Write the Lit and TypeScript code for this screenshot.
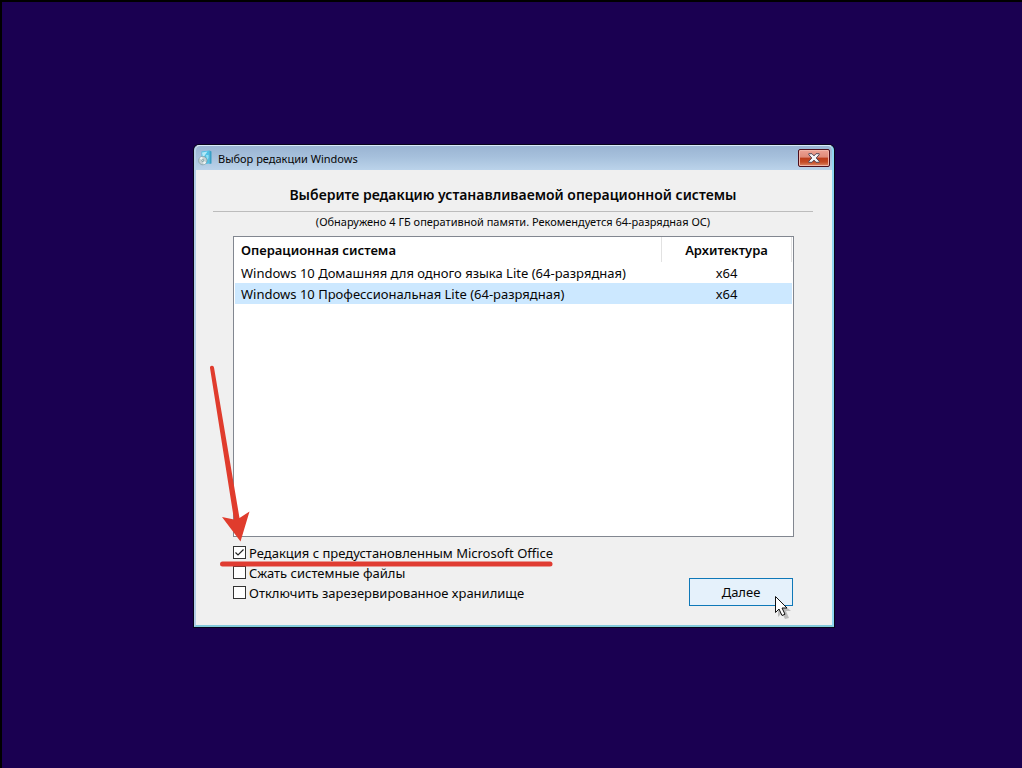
import { LitElement, html, css, svg } from "lit";
import { customElement, state } from "lit/decorators.js";

interface Edition {
  name: string;
  arch: string;
}

const EDITIONS: Edition[] = [
  { name: "Windows 10 Домашняя для одного языка Lite (64-разрядная)", arch: "x64" },
  { name: "Windows 10 Профессиональная Lite (64-разрядная)", arch: "x64" },
];

const OPTIONS = [
  { id: "office", label: "Редакция с предустановленным Microsoft Office", checked: true },
  { id: "compact", label: "Сжать системные файлы", checked: false },
  { id: "reserve", label: "Отключить зарезервированное хранилище", checked: false },
];

@customElement("app-root")
export class AppRoot extends LitElement {
  @state() private selected = 1;

  static styles = css`
    :host {
      display: grid;
      justify-items: center;
      align-items: center;
      box-sizing: border-box;
      min-height: 100vh;
      padding: 2px 0 0 4px;
      border-top: 2px solid #000;
      border-left: 2px solid #000;
      background: #1a0051;
      color: #060606;
      font: 13px/20px "Noto Sans", "Open Sans", sans-serif;
    }
    * {
      box-sizing: border-box;
    }
    .window {
      position: relative;
      width: 100%;
      max-width: 640px;
      border: 2px solid #b4d0e6;
      border-top: 1px solid #d9eaf8;
      border-right-color: #8fd6f0;
      border-bottom-color: #83cbdc;
      border-radius: 5px 5px 0 0;
      background: #f0f0f0;
      box-shadow: 0 0 0 1px #08041c;
    }
    .titlebar {
      display: flex;
      align-items: center;
      gap: 6px;
      height: 24px;
      padding: 0 2px;
      border-radius: 4px 4px 0 0;
      background: linear-gradient(#9ab4d2, #a6c0dc 45%, #bbd3ea);
    }
    .app-icon {
      width: 14px;
      height: 16px;
    }
    .caption {
      flex: 1;
      padding-top: 1px;
      font-size: 11px;
    }
    .close {
      display: flex;
      align-items: center;
      justify-content: center;
      width: 32px;
      height: 18px;
      padding: 0;
      border: 1px solid #4d0f1c;
      border-radius: 2px;
      background: linear-gradient(#eda294, #df8a78 45%, #bc3d1a 50%, #c44a24 75%, #dd8a68);
      box-shadow: inset 0 0 0 1px #f0b5a8;
    }
    .content {
      padding: 15px 19px 19px 17px;
    }
    h1 {
      margin: 0;
      padding-bottom: 6px;
      border-bottom: 1px solid #bcbcbc;
      font-size: 14px;
      line-height: 20px;
      font-weight: 600;
      text-align: center;
    }
    .note {
      margin: 0;
      font-size: 11px;
      text-align: center;
    }
    .panel {
      padding: 4px 19px 0 20px;
    }
    .list {
      min-height: 301px;
      padding: 0 1px;
      border: 1px solid #828790;
      background: #fff;
    }
    table {
      width: 100%;
      border-collapse: collapse;
      table-layout: fixed;
    }
    th {
      height: 25px;
      padding: 1px 6px 0;
      border-right: 1px solid #e2e2e2;
      font-weight: 600;
      text-align: left;
    }
    td {
      height: 21px;
      padding: 0 6px;
    }
    .arch {
      width: 130px;
      text-align: center;
    }
    .selected {
      background: #cce8ff;
    }
    .footer {
      display: flex;
      align-items: flex-end;
      justify-content: space-between;
      padding: 6px 1px 0 0;
    }
    .options {
      padding-bottom: 3px;
    }
    .option {
      display: flex;
      align-items: flex-start;
      gap: 3px;
      height: 20px;
    }
    .option input {
      appearance: none;
      width: 13px;
      height: 13px;
      margin: 3px 0 0;
      border: 1px solid #333;
      background: #fff;
    }
    .option input:checked {
      background: #fff
        url("data:image/svg+xml,%3Csvg xmlns='http://www.w3.org/2000/svg' viewBox='0 0 11 11'%3E%3Cpath d='M1.5 5.5 4 8 9.5 2.5' fill='none' stroke='%23222' stroke-width='1.2'/%3E%3C/svg%3E");
    }
    .next {
      width: 104px;
      height: 28px;
      border: 1px solid #0f78b8;
      background: #e5f1fb;
      color: inherit;
      font: inherit;
    }
    .marks {
      position: absolute;
      left: 7px;
      top: 215px;
      width: 360px;
      height: 210px;
      pointer-events: none;
    }
    .cursor {
      position: absolute;
      right: 40px;
      bottom: 4px;
      width: 18px;
      height: 26px;
      pointer-events: none;
    }
  `;

  private icon() {
    return svg`<svg class="app-icon" viewBox="0 0 14 16" aria-hidden="true">
      <path d="M3.500 1.500 11.500 .5v13L3.500 14.500z" fill="#4fc0e4" />
      <path d="M11.500 .5 13.500 1.500v12l-2 .5z" fill="#3aa0c6" />
      <path d="M4 2.500 9.500 1.500 5 8z" fill="#b4e9f8" />
      <path d="M8 5h2.500v3L9 10z" fill="#8edff5" />
      <circle cx="4.800" cy="10.600" r="4.200" fill="#c3d0d4" stroke="#7f999f" stroke-width=".7" />
      <path d="M4.800 10.600 1.500 8.500A4 4 0 0 1 4.200 6.700zM4.800 10.600 8.200 12.300a4 4 0 0 1-2.600 2.200z" fill="#eef4f3" />
      <circle cx="4.800" cy="10.600" r="1.300" fill="#78989d" />
      <circle cx="4.800" cy="10.600" r=".6" fill="#e8f5f4" />
    </svg>`;
  }

  render() {
    return html`
      <main class="window">
        <header class="titlebar">
          ${this.icon()}
          <span class="caption">Выбор редакции Windows</span>
          <button class="close" aria-label="Закрыть">
            <svg width="12" height="10" viewBox="0 0 12 10" aria-hidden="true">
              <path
                d="M.8.7H4L6 2.900 8 .7h3.200v1L8.200 5l3 3.300v1H8L6 7.100 4 9.300H.8v-1l3-3.300-3-3.300z"
                fill="#f4f4f6"
                stroke="#554858"
                stroke-width="1"
              />
            </svg>
          </button>
        </header>
        <div class="content">
          <h1>Выберите редакцию устанавливаемой операционной системы</h1>
          <p class="note">(Обнаружено 4 ГБ оперативной памяти. Рекомендуется 64-разрядная ОС)</p>
          <div class="panel">
            <div class="list">
              <table>
                <thead>
                  <tr>
                    <th>Операционная система</th>
                    <th class="arch">Архитектура</th>
                  </tr>
                </thead>
                <tbody>
                  ${EDITIONS.map(
                    (e, i) => html`<tr
                      class=${i === this.selected ? "selected" : ""}
                      @click=${() => (this.selected = i)}
                    >
                      <td>${e.name}</td>
                      <td class="arch">${e.arch}</td>
                    </tr>`
                  )}
                </tbody>
              </table>
            </div>
            <div class="footer">
              <div class="options">
                ${OPTIONS.map(
                  (o) => html`<div class="option">
                    <input type="checkbox" id=${o.id} ?checked=${o.checked} />
                    <label for=${o.id}>${o.label}</label>
                  </div>`
                )}
              </div>
              <button class="next">Далее</button>
            </div>
          </div>
        </div>
        <svg class="marks" viewBox="0 0 360 210" aria-hidden="true">
          <path
            d="M7 7a2 2 0 0 1 4-.6L36.500 157 46.500 150.500 37.500 180.500 19 156 31 158.500z"
            fill="#e03c2d"
          />
          <path d="M19.500 203H347" stroke="#e03c32" stroke-width="5" stroke-linecap="round" />
        </svg>
        <svg class="cursor" viewBox="0 0 18 26" aria-hidden="true">
          <path d="M4 5v17l4-4 3 6 4-1-3-7h5z" fill="#000" opacity=".22" />
          <path
            d="M1.500 1.500v16l3.500-3.500 3 6.500 3-1.300-3-6.200h5z"
            fill="#fff"
            stroke="#111"
            stroke-width="1"
          />
        </svg>
      </main>
    `;
  }
}
